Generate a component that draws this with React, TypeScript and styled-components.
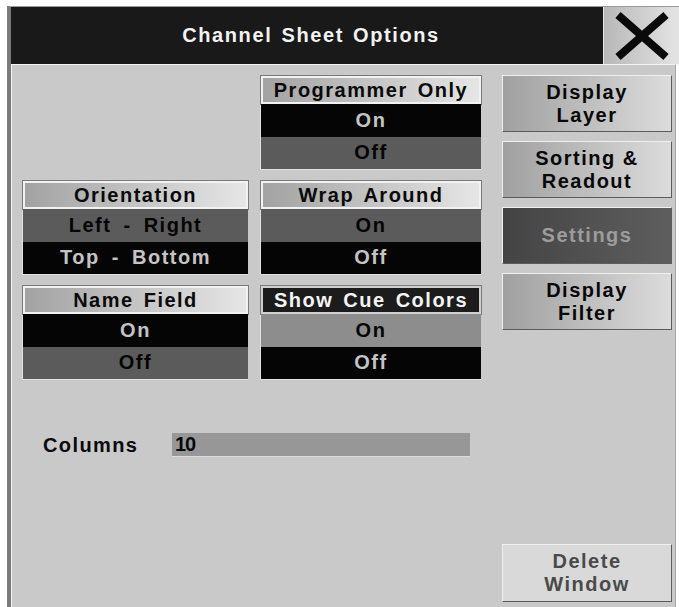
import React from 'react';
import { createGlobalStyle, styled } from 'styled-components';

const GlobalStyle = createGlobalStyle`
  html, body {
    margin: 0;
    padding: 0;
    background: #ffffff;
    overflow: hidden;
  }
  body {
    font-family: "Liberation Sans", Arial, sans-serif;
  }
`;

const Frame = styled.div`
  margin: 6px 0 0 7px;
  height: 601px;
  display: flex;
  flex-direction: column;
  border-left: 4px solid #7a7a7a;
  border-top: 1px solid #9a9a9a;
  box-sizing: border-box;
`;

const TitleRow = styled.div`
  display: flex;
  height: 57px;
  width: 668px;
`;

const TitleBar = styled.div`
  flex: 1;
  background: #191919;
  color: #f2f2f2;
  display: flex;
  align-items: center;
  justify-content: center;
  font-size: 20px;
  font-weight: bold;
  letter-spacing: 1.6px;
  word-spacing: 2px;
  padding-left: 8px;
`;

const CloseButton = styled.div`
  width: 76px;
  background: linear-gradient(to right, #b8b8b8, #e4e4e4);
  border-left: 1px solid #e8e8e8;
  box-sizing: border-box;
  display: flex;
  align-items: center;
  justify-content: center;
`;

const Panel = styled.div`
  flex: 1;
  width: 665px;
  box-sizing: border-box;
  background: #c9c9c9;
  border-top: 1px solid #f4f4f4;
  border-left: 1px solid #f4f4f4;
  border-right: 1px solid #a8a8a8;
  padding: 10px 3px 5px 10px;
  display: flex;
  gap: 21px;
`;

const LeftArea = styled.div`
  width: 459px;
  padding-top: 1px;
  display: flex;
  flex-direction: column;
`;

const OptionGrid = styled.div`
  display: grid;
  grid-template-columns: 226px 221px;
  grid-auto-rows: 94px;
  column-gap: 12px;
  row-gap: 11px;
`;

const Group = styled.div<{ $col: number; $row: number }>`
  grid-column: ${(p) => p.$col};
  grid-row: ${(p) => p.$row};
  display: flex;
  flex-direction: column;
  border-left: 1px solid #e2e2e2;
  border-bottom: 1px solid #e2e2e2;
`;

const GroupHeader = styled.div<{ $dark?: boolean }>`
  height: 28px;
  box-sizing: border-box;
  display: flex;
  align-items: center;
  justify-content: center;
  font-size: 20px;
  font-weight: bold;
  letter-spacing: 1.5px;
  word-spacing: 3px;
  color: ${(p) => (p.$dark ? '#f4f4f4' : '#0a0a0a')};
  background: ${(p) =>
    p.$dark ? '#1c1c1c' : 'linear-gradient(to right, #a2a2a2, #e6e6e6)'};
  border: 2px solid ${(p) => (p.$dark ? '#d0d0d0' : '#f2f2f2')};
  box-shadow: 0 0 0 1px #7a7a7a;
`;

const tones = {
  black: { bg: '#050505', fg: '#c4c4c4' },
  dark: { bg: '#5b5b5b', fg: '#050505' },
  mid: { bg: '#8d8d8d', fg: '#050505' },
};

type Tone = keyof typeof tones;

const OptionRow = styled.div<{ $tone: Tone }>`
  flex: 1;
  display: flex;
  align-items: center;
  justify-content: center;
  font-size: 20px;
  font-weight: bold;
  letter-spacing: 1.5px;
  word-spacing: 5px;
  background: ${(p) => tones[p.$tone].bg};
  color: ${(p) => tones[p.$tone].fg};
`;

const ColumnsRow = styled.div`
  margin-top: 53px;
  display: flex;
  align-items: center;
  padding-left: 21px;
  height: 24px;
`;

const FieldLabel = styled.div`
  width: 129px;
  font-size: 20px;
  font-weight: bold;
  letter-spacing: 1.4px;
  color: #0a0a0a;
`;

const FieldValue = styled.div`
  width: 298px;
  height: 24px;
  background: #979797;
  border-bottom: 1px solid #dcdcdc;
  display: flex;
  align-items: center;
  padding-left: 3px;
  box-sizing: border-box;
  font-size: 20px;
  font-weight: bold;
  letter-spacing: -1px;
  color: #080808;
`;

const RightColumn = styled.div`
  width: 171px;
  display: flex;
  flex-direction: column;
  gap: 9px;
`;

const SideButton = styled.div<{ $active?: boolean; $muted?: boolean }>`
  height: 57px;
  box-sizing: border-box;
  display: flex;
  align-items: center;
  justify-content: center;
  text-align: center;
  font-size: 20px;
  font-weight: bold;
  letter-spacing: 1.5px;
  line-height: 23px;
  border: 1px solid;
  border-color: #f0f0f0 #5c5c5c #5c5c5c #f0f0f0;
  color: ${(p) => (p.$active ? '#9c9c9c' : p.$muted ? '#4a4a4a' : '#080808')};
  background: ${(p) =>
    p.$active
      ? 'linear-gradient(to right, #444444, #5e5e5e)'
      : p.$muted
      ? '#d9d9d9'
      : 'linear-gradient(to right, #a0a0a0, #dcdcdc)'};
`;

const BottomButton = styled(SideButton)`
  margin-top: auto;
  height: 58px;
`;

const CloseIcon = () => (
  <svg width="60" height="50" viewBox="0 0 60 50">
    <path d="M6 4 L54 46 M54 4 L6 46" stroke="#0a0a0a" strokeWidth="8" />
  </svg>
);

type Option = { label: string; tone: Tone };

type GroupDef = {
  title: string;
  col: number;
  row: number;
  dark?: boolean;
  options: Option[];
};

const groups: GroupDef[] = [
  {
    title: 'Programmer Only',
    col: 2,
    row: 1,
    options: [
      { label: 'On', tone: 'black' },
      { label: 'Off', tone: 'dark' },
    ],
  },
  {
    title: 'Orientation',
    col: 1,
    row: 2,
    options: [
      { label: 'Left - Right', tone: 'dark' },
      { label: 'Top - Bottom', tone: 'black' },
    ],
  },
  {
    title: 'Wrap Around',
    col: 2,
    row: 2,
    options: [
      { label: 'On', tone: 'dark' },
      { label: 'Off', tone: 'black' },
    ],
  },
  {
    title: 'Name Field',
    col: 1,
    row: 3,
    options: [
      { label: 'On', tone: 'black' },
      { label: 'Off', tone: 'dark' },
    ],
  },
  {
    title: 'Show Cue Colors',
    col: 2,
    row: 3,
    dark: true,
    options: [
      { label: 'On', tone: 'mid' },
      { label: 'Off', tone: 'black' },
    ],
  },
];

const App: React.FC = () => {
  return (
    <>
      <GlobalStyle />
      <Frame>
        <TitleRow>
          <TitleBar>Channel Sheet Options</TitleBar>
          <CloseButton>
            <CloseIcon />
          </CloseButton>
        </TitleRow>
        <Panel>
          <LeftArea>
            <OptionGrid>
              {groups.map((g) => (
                <Group key={g.title} $col={g.col} $row={g.row}>
                  <GroupHeader $dark={g.dark}>{g.title}</GroupHeader>
                  {g.options.map((o) => (
                    <OptionRow key={o.label} $tone={o.tone}>
                      {o.label}
                    </OptionRow>
                  ))}
                </Group>
              ))}
            </OptionGrid>
            <ColumnsRow>
              <FieldLabel>Columns</FieldLabel>
              <FieldValue>10</FieldValue>
            </ColumnsRow>
          </LeftArea>
          <RightColumn>
            <SideButton>
              Display
              <br />
              Layer
            </SideButton>
            <SideButton>
              Sorting &amp;
              <br />
              Readout
            </SideButton>
            <SideButton $active>Settings</SideButton>
            <SideButton>
              Display
              <br />
              Filter
            </SideButton>
            <BottomButton $muted>
              Delete
              <br />
              Window
            </BottomButton>
          </RightColumn>
        </Panel>
      </Frame>
    </>
  );
};

export default App;
